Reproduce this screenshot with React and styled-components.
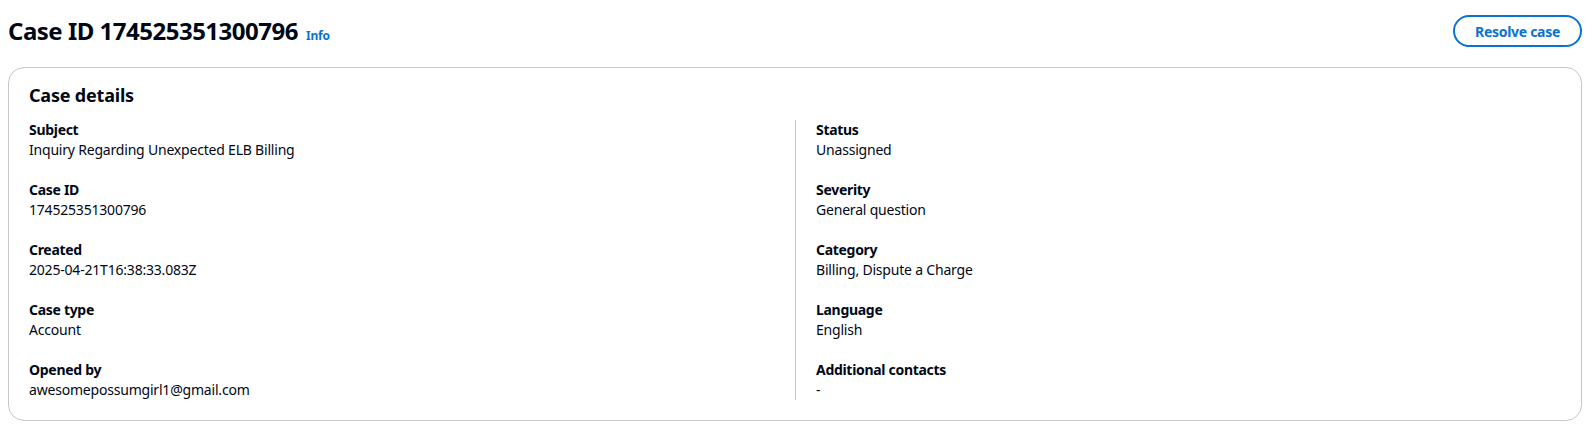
import React from "react";
import styled, { createGlobalStyle } from "styled-components";

const GlobalStyle = createGlobalStyle`
  body {
    margin: 8px;
    background: #ffffff;
    font-family: "Noto Sans", "Open Sans", "Liberation Sans", sans-serif;
    color: #000716;
    letter-spacing: -0.2px;
  }
`;

const Header = styled.div`
  display: flex;
  align-items: center;
  justify-content: space-between;
  height: 32px;
  margin-top: 7px;
  margin-bottom: 20px;
`;

const TitleGroup = styled.div`
  display: flex;
  align-items: baseline;
  gap: 8px;
`;

const Title = styled.h1`
  margin: 0;
  font-size: 24px;
  line-height: 30px;
  font-weight: 700;
  letter-spacing: -0.5px;
`;

const InfoLink = styled.a`
  font-size: 12px;
  font-weight: 700;
  color: #0972d3;
  text-decoration: none;
  cursor: pointer;
`;

const PillButton = styled.button`
  height: 32px;
  padding: 0 20px;
  border: 2px solid #0972d3;
  border-radius: 20px;
  background: #ffffff;
  color: #0972d3;
  font-family: inherit;
  font-size: 14px;
  font-weight: 700;
  letter-spacing: -0.3px;
  cursor: pointer;
`;

const Container = styled.section`
  border: 1px solid #c6c6cd;
  border-radius: 16px;
  padding: 16px 20px 20px;
`;

const ContainerTitle = styled.h2`
  margin: 0 0 14px;
  font-size: 18px;
  line-height: 22px;
  font-weight: 700;
`;

const Columns = styled.div`
  display: grid;
  grid-template-columns: 1fr 1fr;
`;

const Column = styled.div`
  display: flex;
  flex-direction: column;
  gap: 20px;
  padding: ${(p) => (p.$divided ? "0 0 0 20px" : "0 20px 0 0")};
  border-left: ${(p) => (p.$divided ? "1px solid #c6c6cd" : "none")};
`;

const Pair = styled.div`
  display: flex;
  flex-direction: column;
`;

const Label = styled.div`
  font-size: 14px;
  line-height: 20px;
  font-weight: 700;
  letter-spacing: -0.3px;
`;

const Value = styled.div`
  font-size: 14px;
  line-height: 20px;
`;

const left = [
  ["Subject", "Inquiry Regarding Unexpected ELB Billing"],
  ["Case ID", "174525351300796"],
  ["Created", "2025-04-21T16:38:33.083Z"],
  ["Case type", "Account"],
  ["Opened by", "awesomepossumgirl1@gmail.com"],
];

const right = [
  ["Status", "Unassigned"],
  ["Severity", "General question"],
  ["Category", "Billing, Dispute a Charge"],
  ["Language", "English"],
  ["Additional contacts", "-"],
];

export default function App() {
  return (
    <>
      <GlobalStyle />
      <Header>
        <TitleGroup>
          <Title>Case ID 174525351300796</Title>
          <InfoLink>Info</InfoLink>
        </TitleGroup>
        <PillButton>Resolve case</PillButton>
      </Header>
      <Container>
        <ContainerTitle>Case details</ContainerTitle>
        <Columns>
          <Column>
            {left.map(([k, v]) => (
              <Pair key={k}>
                <Label>{k}</Label>
                <Value>{v}</Value>
              </Pair>
            ))}
          </Column>
          <Column $divided>
            {right.map(([k, v]) => (
              <Pair key={k}>
                <Label>{k}</Label>
                <Value>{v}</Value>
              </Pair>
            ))}
          </Column>
        </Columns>
      </Container>
    </>
  );
}
